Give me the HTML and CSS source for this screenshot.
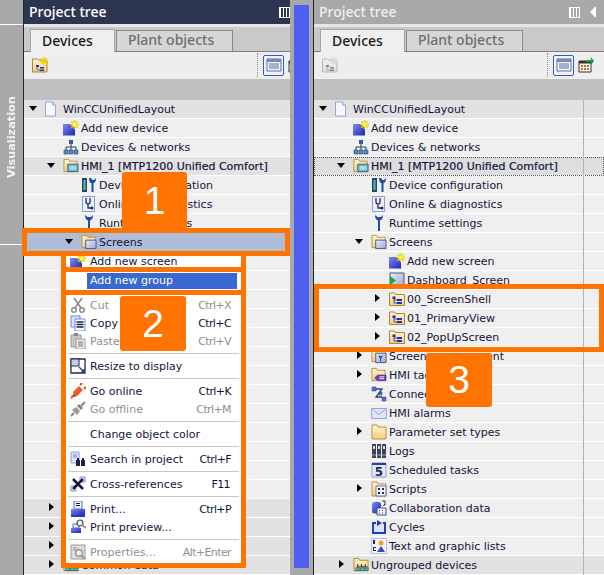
FILE: index.html
```html
<!DOCTYPE html>
<html lang="en">
<head>
<meta charset="utf-8">
<title>Project tree</title>
<link rel="stylesheet" href="styles.css">
</head>
<body>
<svg class="defs" width="0" height="0" aria-hidden="true">
<defs>
<linearGradient id="bl" x1="0" y1="0" x2="1" y2="1"><stop offset="0" stop-color="#7f8cf0"/><stop offset="1" stop-color="#1a24b8"/></linearGradient>
<linearGradient id="fo" x1="0" y1="0" x2="0" y2="1"><stop offset="0" stop-color="#fff6cf"/><stop offset="1" stop-color="#f3cf7d"/></linearGradient>
<linearGradient id="sc" x1="0" y1="0" x2="1" y2="1"><stop offset="0" stop-color="#e8ecf8"/><stop offset="1" stop-color="#9aa8d8"/></linearGradient>
<symbol id="i-new" viewBox="0 0 16 16"><path d="M0 4h12v11.500H0z" fill="url(#bl)"/><path d="M11.500 0v9M7 4.500h9M8.300 1.300l6.400 6.400M14.700 1.300L8.300 7.700" stroke="#e6d400" stroke-width="1.400"/><circle cx="11.500" cy="4.500" r="2" fill="#fff36a"/></symbol>
<symbol id="i-page" viewBox="0 0 16 16"><path d="M.5 1h7l3 3v11H.5z" fill="#f6f8ff" stroke="#9aa6d8"/><path d="M7.500 1v3h3" fill="#d8e0f8" stroke="#9aa6d8"/></symbol>
<symbol id="i-net" viewBox="0 0 16 16"><path d="M6 1h4v4H6z" fill="#3a56a8"/><path d="M8 5v3M3 11V8h10v3M8 8v3" stroke="#30406a" fill="none"/><path d="M1 11h4v4H1zM6 11h4v4H6zM11 11h4v4h-4z" fill="#4f8fb8" stroke="#27446e" stroke-width=".6"/></symbol>
<symbol id="i-hmi" viewBox="0 0 17 16"><path d="M1 1h5l1 2h8v11H1z" fill="url(#fo)" stroke="#b8914a"/><path d="M5 6h11v8H5z" fill="#65bccb" stroke="#4d5f80"/><path d="M7 8h7v4H7z" fill="#a9dde6"/></symbol>
<symbol id="i-cfg" viewBox="0 0 16 16"><path d="M1 1h5v14H1z" fill="#34404f"/><path d="M2.500 3h2v10h-2z" fill="#38c8d8"/><path d="M8 1c0 3 1 5 2.500 5V15h2V6C14 6 15 4 15 1l-2 2h-1.500L10 1z" fill="#1e4fa0"/></symbol>
<symbol id="i-diag" viewBox="0 0 16 16"><path d="M1.500.5h12v15h-12z" fill="#eef1fd" stroke="#8b9bd8"/><path d="M5 2v4c0 2.500 4 2.500 4 0V2M7 8v4h3" fill="none" stroke="#1c2c60" stroke-width="1.300"/><circle cx="11" cy="12" r="1.500" fill="#1c2c60"/></symbol>
<symbol id="i-wrench" viewBox="0 0 16 16"><path d="M4 0c0 3 1 5 3 5.500V16h2V5.500C11 5 12 3 12 0l-2 2H6.500L4 0z" fill="#1e4fa0"/></symbol>
<symbol id="i-scr" viewBox="0 0 17 16"><path d="M1 1h5l1 2h8v11H1z" fill="url(#fo)" stroke="#b8914a"/><path d="M5 6h11v9H5z" fill="url(#sc)" stroke="#47557f"/></symbol>
<symbol id="i-dash" viewBox="0 0 16 16"><path d="M1 1h14v14H1z" fill="url(#sc)" stroke="#4e5a78"/><path d="M1 4l6 4.500L1 13z" fill="#1ea83a"/></symbol>
<symbol id="i-grp" viewBox="0 0 16 16"><path d="M.5 2h5l1 1.500h9v11H.5z" fill="url(#fo)" stroke="#a8873c"/><path d="M3.500 5.500h3V8h-3zM8 8h5v2H8zM8 11h5v2H8z" fill="#1c2fc8"/><path d="M5 8v4h3M5 9h3" fill="none" stroke="#1c2fc8" stroke-width=".8"/></symbol>
<symbol id="i-mgmt" viewBox="0 0 17 16"><path d="M1 1h5l1 2h8v11H1z" fill="url(#fo)" stroke="#b8914a"/><path d="M5 5h11v10H5z" fill="url(#sc)" stroke="#47557f"/><path d="M8 7c0 2 .8 3 1.500 3v4h1.200v-4c.8 0 1.500-1 1.500-3l-1.200 1H9.200z" fill="#1e4fa0"/></symbol>
<symbol id="i-tags" viewBox="0 0 17 16"><path d="M1 1h5l1 2h8v11H1z" fill="url(#fo)" stroke="#b8914a"/><path d="M4 11l3-3h9v6H7z" fill="#6c3cc0" stroke="#4a2596" stroke-width=".6"/><path d="M9 10h5M9 12h5" stroke="#fff"/></symbol>
<symbol id="i-conn" viewBox="0 0 16 16"><path d="M1 1h4v4H1zM11 11h4v4h-4zM8 6h3v3H8z" fill="#4a73d8" stroke="#243f8c" stroke-width=".5"/><path d="M5 3h6L5 11h6" fill="none" stroke="#243f8c" stroke-width="1.300"/></symbol>
<symbol id="i-mail" viewBox="0 0 16 16"><path d="M.5 3.500h15v10H.5z" fill="#dfe6fb" stroke="#97a7de"/><path d="M.5 3.500L8 9.500l7.500-6" fill="none" stroke="#97a7de"/></symbol>
<symbol id="i-fold" viewBox="0 0 16 16"><path d="M1 1h5l1 2h8v12H1z" fill="url(#fo)" stroke="#b8914a"/></symbol>
<symbol id="i-logs" viewBox="0 0 16 16"><path d="M1 1h4v14H1zM6 1h4v14H6zM11 1h4v14h-4z" fill="#3d4458"/><path d="M2 3h2v3H2zM7 3h2v3H7zM12 3h2v3h-2z" fill="#d8dcea"/><path d="M1 12h4M6 12h4M11 12h4" stroke="#9aa0b8"/></symbol>
<symbol id="i-task" viewBox="0 0 16 16"><path d="M1 1h14v14H1z" fill="#e6ebfb" stroke="#8b9bd8"/><path d="M1 1h14v2H1z" fill="#1e3fb8"/><text x="8" y="14" text-anchor="middle" class="ic-num">5</text></symbol>
<symbol id="i-scripts" viewBox="0 0 16 16"><path d="M1 1h5l1 2h8v12H1z" fill="url(#fo)" stroke="#b8914a"/><path d="M5 5h10v10H5z" fill="#f4f6ff" stroke="#6a76a8"/><path d="M7 7h2v2H7zM11 7h2v2h-2zM7 11h2v2H7zM11 11h2v2h-2z" fill="#1c2c60"/></symbol>
<symbol id="i-collab" viewBox="0 0 16 16"><path d="M1 4c0-3 9-3 9 0v8c0 2-9 2-9 0z" fill="url(#bl)"/><path d="M6 8h9v7H6z" fill="#f4f6ff" stroke="#44507a"/><path d="M8 10h1v1H8zM11 10h1v1h-1zM8 12.500h1v1H8zM11 12.500h1v1h-1z" fill="#333"/><path d="M11 1h3v4M12.500 6l1.500-2" stroke="#333" fill="none"/></symbol>
<symbol id="i-cyc" viewBox="0 0 16 16"><path d="M5 4H2v10h12V4h-2" fill="#dbe4fb" stroke="#1e3fb8" stroke-width="2"/><path d="M6 1l5 3-5 3z" fill="#1e3fb8"/></symbol>
<symbol id="i-txt" viewBox="0 0 16 16"><path d="M.5.500h15v15H.5z" fill="#f2f4fd" stroke="#b8c0e0"/><circle cx="10" cy="5" r="2.500" fill="#f0a030"/><path d="M6 14l4-6 4 6z" fill="#2b50b0"/><path d="M2 2h2v4H2zM2 9h3v1H3v2h2v1H2z" fill="#1c2c60"/></symbol>
<symbol id="i-ungr" viewBox="0 0 17 16"><path d="M1 1h5l1 2h9v11H1z" fill="url(#fo)" stroke="#a8873c"/><path d="M4 10h11M5 7v3M9 7v3M13 7v3" stroke="#222"/><path d="M3 11h4v3H3zM8 11h4v3H8zM13 11h3v3h-3z" fill="#48c0d0" stroke="#222" stroke-width=".5"/></symbol>
<symbol id="i-tool" viewBox="0 0 16 16"><path d="M.5 2h5l1 1h8.500v12H.5z" fill="url(#fo)" stroke="#a8873c"/><path d="M4 8h3v2H4zM8 10h4v1.500H8zM8 12.500h4V14H8z" fill="#1c2fc8"/><path d="M5 10v3h3" fill="none" stroke="#1c2fc8" stroke-width=".6"/><path d="M12 0v8M8 4h8M9.200 1.200l5.600 5.600M14.800 1.200L9.200 6.800" stroke="#e6d400" stroke-width="1.300"/></symbol>
<symbol id="i-list" viewBox="0 0 16 16"><path d="M1 2h14v12H1z" fill="#f4f6ff" stroke="#5a6a98"/><path d="M1 2h14v3H1z" fill="#7a88b8"/><path d="M3 7h10M3 9h10M3 11h10" stroke="#5a6a98"/></symbol>
<symbol id="i-cal" viewBox="0 0 16 16"><path d="M1 4h12v11H1z" fill="#f4f6ff" stroke="#333"/><path d="M1 4h12v2.500H1z" fill="#333"/><path d="M3 8h2v2H3zM6 8h2v2H6zM9 8h2v2H9zM3 11h2v2H3zM6 11h2v2H6zM9 11h2v2H9z" fill="#d2691e"/><path d="M8 3h5V0l3 4-3 4V5H8z" fill="#1ea040"/></symbol>
<symbol id="m-cut" viewBox="0 0 16 16"><path d="M4 1l7 10M12 1L5 11" stroke="#888" stroke-width="1.500"/><circle cx="4" cy="13" r="2.300" fill="none" stroke="#888" stroke-width="1.400"/><circle cx="12" cy="13" r="2.300" fill="none" stroke="#888" stroke-width="1.400"/></symbol>
<symbol id="m-copy" viewBox="0 0 16 16"><path d="M1 1h9v11H1z" fill="#dfe6fb" stroke="#6d85d8"/><path d="M5 4h10v12H5z" fill="#fff" stroke="#6d85d8"/><path d="M6.500 7h7M6.500 9.500h7M6.500 12h7" stroke="#14204e" stroke-width="1.300"/></symbol>
<symbol id="m-paste" viewBox="0 0 16 16"><path d="M1 2h10v12H1z" fill="#c8c8c8" stroke="#999"/><path d="M4 0h4v3H4z" fill="#888"/><path d="M6 6h9v10H6z" fill="#eee" stroke="#999"/><path d="M8 9h5M8 11h5M8 13h5" stroke="#777"/></symbol>
<symbol id="m-resize" viewBox="0 0 16 16"><path d="M1 1h14v14H1z" fill="#fff" stroke="#1f2a4c" stroke-width="1.300"/><path d="M1 1h8v7H1z" fill="#c4cff0" stroke="#1f2a4c"/><path d="M9 9l5 5m0-3v3h-3" fill="none" stroke="#1f2a4c" stroke-width="1.200"/></symbol>
<symbol id="m-on" viewBox="0 0 16 16"><path d="M3 9l6-6 4 4-6 6z" fill="#ee5a24"/><path d="M1 15l3-3M10 2l2-2M14 6l2-2" stroke="#d04a14" stroke-width="1.800"/><path d="M3 9l4 4-3 1z" fill="#c94010"/></symbol>
<symbol id="m-off" viewBox="0 0 16 16"><path d="M2 9l4-3 4 4-3 4z" fill="#999"/><path d="M1 15l3-3M11 5l4-4" stroke="#888" stroke-width="2"/><path d="M8 4l4 4" stroke="#888" stroke-width="3"/></symbol>
<symbol id="m-find" viewBox="0 0 16 16"><path d="M1 1h8v11H1z" fill="#dfe6fb" stroke="#8b9bd8"/><path d="M3 4h4M3 6h4" stroke="#6d85d8"/><path d="M6 9h4v6H6zM11 9h4v6h-4z" fill="#16224e"/><path d="M7 7h2v3H7zM12 7h2v3h-2z" fill="#16224e"/></symbol>
<symbol id="m-xref" viewBox="0 0 16 16"><path d="M10 1h5v5h-5zM1 10h5v5H1z" fill="#e4e9fb" stroke="#7d8fd8"/><path d="M3 3l10 10M13 3L3 13" stroke="#10183a" stroke-width="2.500"/></symbol>
<symbol id="m-print" viewBox="0 0 16 16"><path d="M4 0h8v8H4z" fill="#f0f3ff" stroke="#5a6cb8"/><path d="M6 2.500h4M6 4.500h4" stroke="#222"/><path d="M1 8h14v6H1z" fill="url(#bl)"/><path d="M1 14h14v2H1z" fill="#2b3cc8"/></symbol>
<symbol id="m-prev" viewBox="0 0 16 16"><path d="M1 9h10v5H1z" fill="url(#bl)"/><path d="M3 5h6v4H3z" fill="#f0f3ff" stroke="#5a6cb8"/><circle cx="10" cy="4" r="3" fill="#eaf0ff" stroke="#3a4670" stroke-width="1.200"/><path d="M12 6l4 3" stroke="#b8923a" stroke-width="2"/></symbol>
<symbol id="m-prop" viewBox="0 0 16 16"><path d="M1 1h14v14H1z" fill="#ddd" stroke="#999"/><path d="M3 4h4M3 6h3" stroke="#999"/><circle cx="9" cy="9" r="3.300" fill="#eee" stroke="#888" stroke-width="1.200"/><path d="M11.500 11.500L15 15" stroke="#888" stroke-width="1.600"/></symbol>
</defs>
</svg>

<div class="stage">
  <aside class="side">
    <div class="side-top"></div>
    <div class="side-mid"><span class="side-label">Visualization</span></div>
    <div class="side-low"></div>
  </aside>

  <section class="panel panel-left">
    <div class="panel-inner">
      <header class="head head-active"><span class="head-title">Project tree</span><span class="head-icons"><span class="pin"></span><span class="collapse"></span></span></header>
      <div class="head-gap"></div>
      <nav class="tabs"><span class="tab tab-on">Devices</span><span class="tab">Plant objects</span></nav>
      <div class="toolbar">
        <svg class="tb-icon"><use href="#i-tool"/></svg>
        <span class="tb-sep"></span>
        <span class="tb-btn"><svg class="tb-btn-icon"><use href="#i-list"/></svg></span>
        <svg class="tb-icon"><use href="#i-cal"/></svg>
      </div>
      <div class="band"></div>
      <div class="tree">
        <div class="row l0 grey"><i class="ar down"></i><svg class="ic"><use href="#i-page"/></svg><span>WinCCUnifiedLayout</span></div>
        <div class="row l1"><i class="ar"></i><svg class="ic"><use href="#i-new"/></svg><span>Add new device</span></div>
        <div class="row l1"><i class="ar"></i><svg class="ic"><use href="#i-net"/></svg><span>Devices &amp; networks</span></div>
        <div class="row l1 grey"><i class="ar down"></i><svg class="ic"><use href="#i-hmi"/></svg><span class="strong">HMI_1 [MTP1200 Unified Comfort]</span></div>
        <div class="row l2"><i class="ar"></i><svg class="ic"><use href="#i-cfg"/></svg><span>Device configuration</span></div>
        <div class="row l2"><i class="ar"></i><svg class="ic"><use href="#i-diag"/></svg><span>Online &amp; diagnostics</span></div>
        <div class="row l2"><i class="ar"></i><svg class="ic"><use href="#i-wrench"/></svg><span>Runtime settings</span></div>
        <div class="row l2 sel"><i class="ar down"></i><svg class="ic"><use href="#i-scr"/></svg><span>Screens</span></div>
        <div class="row"></div><div class="row"></div><div class="row"></div><div class="row"></div><div class="row"></div>
        <div class="row"></div><div class="row"></div><div class="row"></div><div class="row"></div><div class="row"></div>
        <div class="row"></div><div class="row"></div><div class="row"></div>
        <div class="row l1 grey"><i class="ar right"></i></div>
        <div class="row l1 grey"><i class="ar right"></i></div>
        <div class="row l1 grey"><i class="ar right"></i></div>
        <div class="row l1 grey"><i class="ar right"></i><svg class="ic"><use href="#i-ungr"/></svg><span>Common data</span></div>
      </div>
    </div>
  </section>

  <div class="split"><div class="split-bar"></div></div>

  <section class="panel panel-right">
    <div class="panel-inner">
      <header class="head head-idle"><span class="head-title">Project tree</span><span class="head-icons"><span class="pin"></span><span class="collapse"></span></span></header>
      <div class="head-gap"></div>
      <nav class="tabs"><span class="tab tab-on">Devices</span><span class="tab">Plant objects</span></nav>
      <div class="toolbar">
        <svg class="tb-icon off"><use href="#i-tool"/></svg>
        <span class="tb-sep"></span>
        <span class="tb-btn"><svg class="tb-btn-icon"><use href="#i-list"/></svg></span>
        <svg class="tb-icon"><use href="#i-cal"/></svg>
      </div>
      <div class="band"></div>
      <div class="tree tree-ruled">
        <div class="row l0 grey"><i class="ar down"></i><svg class="ic"><use href="#i-page"/></svg><span>WinCCUnifiedLayout</span></div>
        <div class="row l1"><i class="ar"></i><svg class="ic"><use href="#i-new"/></svg><span>Add new device</span></div>
        <div class="row l1"><i class="ar"></i><svg class="ic"><use href="#i-net"/></svg><span>Devices &amp; networks</span></div>
        <div class="row l1 focus"><i class="ar down"></i><svg class="ic"><use href="#i-hmi"/></svg><span class="strong">HMI_1 [MTP1200 Unified Comfort]</span></div>
        <div class="row l2"><i class="ar"></i><svg class="ic"><use href="#i-cfg"/></svg><span>Device configuration</span></div>
        <div class="row l2"><i class="ar"></i><svg class="ic"><use href="#i-diag"/></svg><span>Online &amp; diagnostics</span></div>
        <div class="row l2"><i class="ar"></i><svg class="ic"><use href="#i-wrench"/></svg><span>Runtime settings</span></div>
        <div class="row l2"><i class="ar down"></i><svg class="ic"><use href="#i-scr"/></svg><span>Screens</span></div>
        <div class="row l3"><i class="ar"></i><svg class="ic"><use href="#i-new"/></svg><span>Add new screen</span></div>
        <div class="row l3"><i class="ar"></i><svg class="ic"><use href="#i-dash"/></svg><span>Dashboard_Screen</span></div>
        <div class="row l3"><i class="ar right"></i><svg class="ic"><use href="#i-grp"/></svg><span>00_ScreenShell</span></div>
        <div class="row l3"><i class="ar right"></i><svg class="ic"><use href="#i-grp"/></svg><span>01_PrimaryView</span></div>
        <div class="row l3"><i class="ar right"></i><svg class="ic"><use href="#i-grp"/></svg><span>02_PopUpScreen</span></div>
        <div class="row l2"><i class="ar right"></i><svg class="ic"><use href="#i-mgmt"/></svg><span>Screen management</span></div>
        <div class="row l2"><i class="ar right"></i><svg class="ic"><use href="#i-tags"/></svg><span>HMI tags</span></div>
        <div class="row l2"><i class="ar"></i><svg class="ic"><use href="#i-conn"/></svg><span>Connections</span></div>
        <div class="row l2"><i class="ar"></i><svg class="ic"><use href="#i-mail"/></svg><span>HMI alarms</span></div>
        <div class="row l2"><i class="ar right"></i><svg class="ic"><use href="#i-fold"/></svg><span>Parameter set types</span></div>
        <div class="row l2"><i class="ar"></i><svg class="ic"><use href="#i-logs"/></svg><span>Logs</span></div>
        <div class="row l2"><i class="ar"></i><svg class="ic"><use href="#i-task"/></svg><span>Scheduled tasks</span></div>
        <div class="row l2"><i class="ar right"></i><svg class="ic"><use href="#i-scripts"/></svg><span>Scripts</span></div>
        <div class="row l2"><i class="ar"></i><svg class="ic"><use href="#i-collab"/></svg><span>Collaboration data</span></div>
        <div class="row l2"><i class="ar"></i><svg class="ic"><use href="#i-cyc"/></svg><span>Cycles</span></div>
        <div class="row l2"><i class="ar"></i><svg class="ic"><use href="#i-txt"/></svg><span>Text and graphic lists</span></div>
        <div class="row l1 grey"><i class="ar right"></i><svg class="ic"><use href="#i-ungr"/></svg><span>Ungrouped devices</span></div>
      </div>
    </div>
  </section>
</div>

<div class="mark mark-screens"></div>
<div class="mark mark-groups"></div>

<div class="menu">
  <div class="m-top"><svg class="m-ic"><use href="#i-new"/></svg><span>Add new screen</span></div>
  <div class="m-bar"></div>
  <div class="m-group"><span>Add new group</span></div>
  <div class="m-bar"></div>
  <div class="m-body">
    <div class="mi dim"><svg class="m-ic"><use href="#m-cut"/></svg><span>Cut</span><kbd>Ctrl+X</kbd></div>
    <div class="mi"><svg class="m-ic"><use href="#m-copy"/></svg><span>Copy</span><kbd>Ctrl+C</kbd></div>
    <div class="mi dim"><svg class="m-ic"><use href="#m-paste"/></svg><span>Paste</span><kbd>Ctrl+V</kbd></div>
    <hr>
    <div class="mi"><svg class="m-ic"><use href="#m-resize"/></svg><span>Resize to display</span></div>
    <hr>
    <div class="mi"><svg class="m-ic"><use href="#m-on"/></svg><span>Go online</span><kbd>Ctrl+K</kbd></div>
    <div class="mi dim"><svg class="m-ic"><use href="#m-off"/></svg><span>Go offline</span><kbd>Ctrl+M</kbd></div>
    <hr>
    <div class="mi"><span class="m-ic"></span><span>Change object color</span></div>
    <hr>
    <div class="mi"><svg class="m-ic"><use href="#m-find"/></svg><span>Search in project</span><kbd>Ctrl+F</kbd></div>
    <hr>
    <div class="mi"><svg class="m-ic"><use href="#m-xref"/></svg><span>Cross-references</span><kbd class="kf">F11</kbd></div>
    <hr>
    <div class="mi"><svg class="m-ic"><use href="#m-print"/></svg><span>Print...</span><kbd>Ctrl+P</kbd></div>
    <div class="mi"><svg class="m-ic"><use href="#m-prev"/></svg><span>Print preview...</span></div>
    <hr>
    <div class="mi dim"><svg class="m-ic"><use href="#m-prop"/></svg><span>Properties...</span><kbd>Alt+Enter</kbd></div>
  </div>
</div>

<div class="badge badge-1">1</div>
<div class="badge badge-2">2</div>
<div class="badge badge-3">3</div>
</body>
</html>
```

FILE: styles.css
```css
html, body { margin: 0; padding: 0; width: 604px; height: 575px; overflow: hidden; background: #a9a9a9; }
body { position: relative; font-family: "DejaVu Sans", sans-serif; font-size: 11px; color: #14143a; }
.defs { position: absolute; }
.ic-num { font: bold 12px "DejaVu Sans", sans-serif; fill: #1c2c60; }

.stage { display: flex; width: 604px; height: 575px; }

.side { width: 23px; flex: none; display: flex; flex-direction: column; background: #a9a9a9; border-right: 1px solid #1f2430; }
.side-top { height: 24px; flex: none; border-bottom: 1px solid #fff; }
.side-mid { height: 220px; flex: none; border-bottom: 1px solid #fff; padding-top: 72px; box-sizing: border-box; display: flex; justify-content: center; }
.side-label { writing-mode: vertical-rl; transform: rotate(180deg); height: 81px; color: #f2f2f2; font-weight: bold; font-size: 11.3px; white-space: nowrap; }
.side-low { flex: 1; }

.panel { height: 575px; overflow: hidden; flex: none; background: #efefef; }
.panel-left { width: 266px; }
.panel-right { width: 290px; }
.panel-inner { width: 290px; }

.head { height: 24px; display: flex; align-items: center; justify-content: space-between; padding: 0 8px 0 5px; box-sizing: border-box; color: #fff; }
.head-active { background: #2d3650; }
.head-idle { background: #a9a9a9; color: #f0f0f0; }
.head-title { font: 500 14px "Noto Sans", sans-serif; position: relative; top: -1px; }
.head-icons { display: flex; align-items: center; gap: 10px; }
.pin { width: 9px; height: 9px; border: 1px solid #fff; background: repeating-linear-gradient(90deg, #fff 0 1px, transparent 1px 3px); }
.collapse { width: 0; height: 0; border-style: solid; border-width: 6px 6px 6px 0; border-color: transparent #fff transparent transparent; }
.head-gap { height: 3px; background: #e6e6e6; }

.tabs { height: 25px; display: flex; align-items: flex-end; gap: 1px; padding-left: 6px; background: #c9c9c9; border-bottom: 1px solid #7f7f7f; box-sizing: border-box; }
.tab { width: 117px; height: 21px; box-sizing: border-box; display: flex; align-items: center; padding: 0 0 3px 11px; background: #d6d6d6; border: 1px solid #8a8a8a; border-bottom: 0; color: #6f6f6f; font: 500 14px "Noto Sans", sans-serif; }
.tab-on { width: 85px; height: 23px; margin-bottom: -1px; padding-bottom: 2px; background: #efefef; color: #1a1a1a; border-color: #a5a5a5; }

.toolbar { height: 27px; display: flex; align-items: center; padding: 0 0 1px 8px; background: #eeeeee; box-sizing: border-box; }
.tb-icon { width: 16px; height: 16px; flex: none; }
.tb-icon.off { filter: grayscale(1) opacity(.55); }
.tb-sep { margin-left: 209px; width: 0; height: 24px; border-left: 1px dotted #8a8a8a; }
.tb-btn { margin: 0 4px 0 5px; width: 21px; height: 21px; box-sizing: border-box; border: 1px solid #2a5fc8; border-radius: 2px; display: flex; align-items: center; justify-content: center; background: #f2f4fa; }
.tb-btn-icon { width: 16px; height: 16px; }
.band { height: 21px; background: #c0c0c0; }

.tree { position: relative; }
.tree-ruled::after { content: ""; position: absolute; top: 0; bottom: 0; left: 269px; width: 1px; background: #b4b4b4; }
.row { height: 19px; box-sizing: border-box; border-bottom: 1px solid #fff; display: flex; align-items: center; background: #efefef; white-space: nowrap; }
.l0 { padding-left: 5px; }
.l1 { padding-left: 23px; }
.l2 { padding-left: 41px; }
.l3 { padding-left: 59px; }
.grey { background: #e2e2e2; }
.strong { -webkit-text-stroke: .2px currentColor; }
.sel { background: #b0bdd8; }
.focus { background: #dcdedf; outline: 1px dotted #555; outline-offset: -1px; }
.ar { width: 16px; flex: none; height: 10px; position: relative; }
.down::before { content: ""; position: absolute; left: 0; top: 2px; border-style: solid; border-width: 5px 4.5px 0; border-color: #000 transparent transparent; }
.right::before { content: ""; position: absolute; left: 2px; top: 0; border-style: solid; border-width: 4.5px 0 4.5px 5px; border-color: transparent transparent transparent #000; }
.ic { width: 16px; height: 16px; flex: none; margin-right: 2px; }

.split { width: 24px; flex: none; background: #a9a9a9; border-right: 1px solid #1f2430; padding: 5px 4px 7px 4px; box-sizing: border-box; }
.split-bar { width: 15px; height: 100%; background: #4d5ef0; }

.mark { position: absolute; box-sizing: border-box; border: 5px solid #ff7300; }
.mark-screens { left: 22px; top: 228px; width: 268px; height: 28px; }
.mark-groups { left: 314px; top: 284px; width: 290px; height: 68px; }

.menu { position: absolute; left: 61px; top: 256px; width: 185px; height: 312px; box-sizing: border-box; border: 5px solid #ff7300; border-top: 0; background: #ff7300; display: flex; flex-direction: column; }
.menu span, .menu kbd { font-size: 11px; }
.m-top { height: 11px; flex: none; overflow: hidden; background: #fff; display: flex; align-items: center; padding-left: 4px; }
.m-bar { height: 5px; flex: none; }
.m-group { height: 18px; flex: none; background: #fff; padding: 1px 4px 1px 21px; box-sizing: border-box; display: flex; }
.m-group span { flex: 1; background: #3768d4; color: #fff; line-height: 16px; padding-left: 3px; }
.m-body { flex: 1; background: #fff; padding-top: 1px; display: flex; flex-direction: column; }
.mi { height: 18px; flex: none; display: flex; align-items: center; padding: 0 10px 0 4px; }
.mi span:nth-of-type(1) { white-space: nowrap; }
.m-ic { width: 16px; height: 16px; margin-right: 4px; flex: none; }
.menu .mi kbd { margin-left: auto; font-family: inherit; letter-spacing: -.6px; }
.dim { color: #8f8f8f; }
.kf { margin-right: 1px; }
hr { height: 1px; border: 0; background: #c8c8c8; margin: 3px 2px; flex: none; }

.badge { position: absolute; background: #ff7300; color: #fff; border-radius: 3px; font: 39px "Liberation Sans", sans-serif; display: flex; align-items: center; justify-content: center; }
.badge-1 { left: 122px; top: 172px; width: 65px; height: 58px; }
.badge-2 { left: 120px; top: 296px; width: 66px; height: 55px; }
.badge-3 { left: 426px; top: 353px; width: 66px; height: 54px; }
```
